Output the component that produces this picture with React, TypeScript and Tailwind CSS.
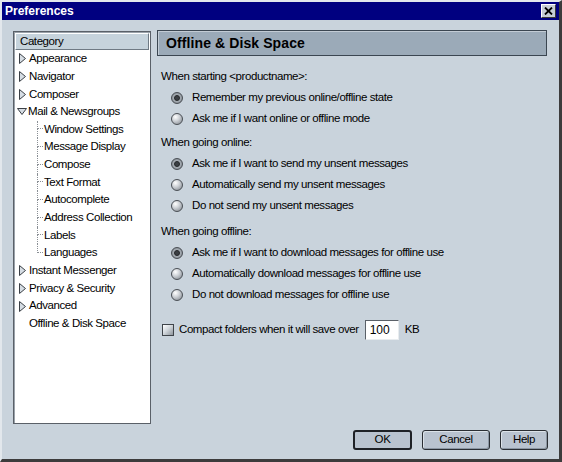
import React from "react";

const font = "font-['Liberation_Sans',Arial,sans-serif]";

function Triangle({ open }: { open?: boolean }) {
  if (open) {
    return (
      <svg width="10" height="7" viewBox="0 0 10 7" className="shrink-0">
        <polygon points="0.5,0.5 9.5,0.5 5,6.5" fill="#d6dde4" stroke="#3a3f45" strokeWidth="1" />
      </svg>
    );
  }
  return (
    <svg width="7" height="11" viewBox="0 0 7 11" className="shrink-0">
      <polygon points="0.5,0.5 6.5,5.5 0.5,10.5" fill="#d6dde4" stroke="#3a3f45" strokeWidth="1" />
    </svg>
  );
}

function Radio({ checked }: { checked?: boolean }) {
  return (
    <span
      className={
        "w-[12px] h-[12px] rounded-full border border-[#4a4f55] flex items-center justify-center shrink-0 " +
        (checked
          ? "bg-[radial-gradient(circle_at_50%_50%,#c9ced4_0%,#9aa1a8_60%,#5d636a_100%)]"
          : "bg-[radial-gradient(circle_at_35%_30%,#ffffff_0%,#cfd3d8_40%,#7b8188_100%)]")
      }
    >
      {checked && <span className="w-[6px] h-[6px] rounded-full bg-[#3b3f44] border border-[#24272a]" />}
    </span>
  );
}

const top = ["Appearance", "Navigator", "Composer"];
const mailKids = [
  "Window Settings",
  "Message Display",
  "Compose",
  "Text Format",
  "Autocomplete",
  "Address Collection",
  "Labels",
  "Languages",
];
const bottom = ["Instant Messenger", "Privacy & Security", "Advanced"];

function TreeRow({ children, className = "" }: { children: React.ReactNode; className?: string }) {
  return <div className={"h-[17.67px] flex items-center " + className}>{children}</div>;
}

function Section({ label, options }: { label: string; options: string[] }) {
  return (
    <>
      <div className="h-[21px] flex items-center pl-[4px]">{label}</div>
      {options.map((o, i) => (
        <div key={o} className="h-[21px] flex items-center pl-[14px] gap-[9px]">
          <Radio checked={i === 0} />
          <span>{o}</span>
        </div>
      ))}
    </>
  );
}

function Button({ label, w, primary }: { label: string; w: string; primary?: boolean }) {
  return (
    <div
      className={
        "h-[20px] rounded-[3px] bg-[#b9c3cf] flex items-center justify-center text-black " +
        w +
        (primary
          ? " border-2 border-[#1e2126]"
          : " border border-[#2a2e33] shadow-[inset_1px_1px_0_#dbe2e8,inset_-1px_-1px_0_#8b96a2]")
      }
    >
      {label}
    </div>
  );
}

export default function App() {
  return (
    <div
      className={
        "w-[562px] h-[462px] bg-[#c9d3dc] border-t-2 border-l-2 border-r-[3px] border-b-[3px] border-t-[#e2e7ec] border-l-[#e2e7ec] border-r-[#3c3c3c] border-b-[#3c3c3c] flex flex-col text-[11.5px] tracking-[-0.42px] text-black " +
        font
      }
    >
      {/* title bar */}
      <div className="h-[18px] bg-[#000080] flex items-center justify-between pl-[3px] pr-[3px]">
        <span className="text-white font-bold text-[12px] tracking-normal">Preferences</span>
        <span className="w-[15px] h-[14px] bg-[#c6ced6] border border-t-white border-l-white border-r-[#3a3a3a] border-b-[#3a3a3a] flex items-center justify-center">
          <svg width="9" height="8" viewBox="0 0 9 8">
            <path d="M1 0.5 L8 7.5 M8 0.5 L1 7.5" stroke="#000" strokeWidth="1.8" />
          </svg>
        </span>
      </div>

      <div className="flex">
        {/* tree */}
        <div className="ml-[11px] mt-[11px] w-[138px] h-[393px] bg-white border border-[#5a6068] shadow-[inset_1px_1px_0_#9aa2aa]">
          <div className="h-[17px] mx-[1px] mt-[1px] bg-[#c6d3dc] border border-t-white border-l-white border-r-[#6f7a84] border-b-[#6f7a84] flex items-center pl-[4px]">
            Category
          </div>
          {top.map((t) => (
            <TreeRow key={t} className="pl-[5px] gap-[3px]">
              <Triangle />
              <span>{t}</span>
            </TreeRow>
          ))}
          <TreeRow className="pl-[3px] gap-[1px]">
            <Triangle open />
            <span>Mail &amp; Newsgroups</span>
          </TreeRow>
          {mailKids.map((k, i) => (
            <TreeRow key={k} className="pl-[23px]">
              <span className="w-[6px] self-stretch flex flex-col shrink-0">
                <span className="h-1/2 border-l border-b border-dotted border-[#8a8f95]" />
                {i < mailKids.length - 1 && <span className="flex-1 border-l border-dotted border-[#8a8f95]" />}
              </span>
              <span className="pl-[1px]">{k}</span>
            </TreeRow>
          ))}
          {bottom.map((b) => (
            <TreeRow key={b} className="pl-[5px] gap-[3px]">
              <Triangle />
              <span>{b}</span>
            </TreeRow>
          ))}
          <TreeRow className="pl-[15px]">
            <span>Offline &amp; Disk Space</span>
          </TreeRow>
        </div>

        {/* right panel */}
        <div className="ml-[6px] mt-[10px] w-[390px] flex flex-col">
          <div className="h-[26px] bg-[#9baab8] border border-[#3b4651] shadow-[inset_1px_1px_0_#c3ccd5] flex items-center pl-[8px]">
            <span className="font-bold text-[14px] tracking-[0.1px]">Offline &amp; Disk Space</span>
          </div>
          <div className="mt-[10px]">
            <Section
              label="When starting <productname>:"
              options={["Remember my previous online/offline state", "Ask me if I want online or offline mode"]}
            />
          </div>
          <div className="mt-[3px]">
            <Section
              label="When going online:"
              options={[
                "Ask me if I want to send my unsent messages",
                "Automatically send my unsent messages",
                "Do not send my unsent messages",
              ]}
            />
          </div>
          <div className="mt-[5px]">
            <Section
              label="When going offline:"
              options={[
                "Ask me if I want to download messages for offline use",
                "Automatically download messages for offline use",
                "Do not download messages for offline use",
              ]}
            />
          </div>
          <div className="mt-[14px] h-[21px] flex items-center pl-[5px]">
            <span className="w-[12px] h-[12px] border border-[#3f444a] bg-[linear-gradient(135deg,#ffffff_0%,#d3d8dd_45%,#8d949b_100%)] shrink-0" />
            <span className="ml-[5px]">Compact folders when it will save over</span>
            <span className="ml-[6px] w-[34px] h-[20px] bg-white border border-t-[#5a6068] border-l-[#5a6068] border-r-[#e8ecef] border-b-[#e8ecef] flex items-center pl-[4px] text-[12px] tracking-normal">
              100
            </span>
            <span className="ml-[6px]">KB</span>
          </div>
        </div>
      </div>

      {/* buttons */}
      <div className="mt-[6px] flex justify-end pr-[11px] gap-[10px]">
        <Button label="OK" w="w-[59px]" primary />
        <Button label="Cancel" w="w-[68px]" />
        <Button label="Help" w="w-[48px]" />
      </div>
    </div>
  );
}
